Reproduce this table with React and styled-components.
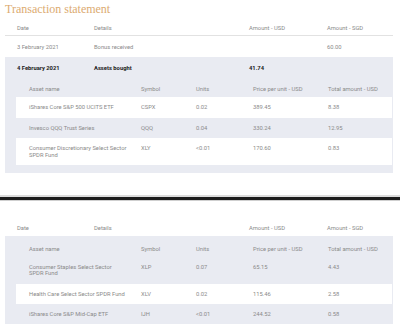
import React from "react";
import styled, { createGlobalStyle } from "styled-components";

const GlobalStyle = createGlobalStyle`
  body {
    margin: 0;
    background: #fff;
    font-family: Roboto, "Liberation Sans", sans-serif;
  }
`;

const firstHoldings = [
  { name: "iShares Core S&P 500 UCITS ETF", symbol: "CSPX", units: "0.02", price: "389.45", total: "8.38" },
  { name: "Invesco QQQ Trust Series", symbol: "QQQ", units: "0.04", price: "330.24", total: "12.95" },
  { name: "Consumer Discretionary Select Sector\nSPDR Fund", symbol: "XLY", units: "<0.01", price: "170.60", total: "0.83" },
];

const secondHoldings = [
  { name: "Consumer Staples Select Sector\nSPDR Fund", symbol: "XLP", units: "0.07", price: "65.15", total: "4.43" },
  { name: "Health Care Select Sector SPDR Fund", symbol: "XLV", units: "0.02", price: "115.46", total: "2.58" },
  { name: "iShares Core S&P Mid-Cap ETF", symbol: "IJH", units: "<0.01", price: "244.52", total: "0.58" },
];

const HoldingsTable = ({ rows, firstShaded }) => (
  <>
    <SubHeader>
      <Cell>Asset name</Cell>
      <Cell>Symbol</Cell>
      <Cell>Units</Cell>
      <Cell>Price per unit - USD</Cell>
      <Cell>Total amount - USD</Cell>
    </SubHeader>
    {rows.map((r, i) => (
      <HoldingRow key={r.symbol} $shaded={(i % 2 === 0) === firstShaded}>
        <NameCell>{r.name}</NameCell>
        <Cell>{r.symbol}</Cell>
        <Cell>{r.units}</Cell>
        <Cell>{r.price}</Cell>
        <Cell>{r.total}</Cell>
      </HoldingRow>
    ))}
  </>
);

const App = () => {
  return (
    <Page>
      <GlobalStyle />
      <Title>Transaction statement</Title>
      <Statement>
        <TxRow $head $line>
          <Cell>Date</Cell>
          <Cell>Details</Cell>
          <Cell>Amount - USD</Cell>
          <Cell>Amount - SGD</Cell>
        </TxRow>
        <TxRow>
          <Cell>3 February 2021</Cell>
          <Cell>Bonus received</Cell>
          <Cell></Cell>
          <Cell>60.00</Cell>
        </TxRow>
        <GreyBox $bottom={8}>
          <TxRow $bold>
            <Cell>4 February 2021</Cell>
            <Cell>Assets bought</Cell>
            <Cell>41.74</Cell>
            <Cell></Cell>
          </TxRow>
          <HoldingsTable rows={firstHoldings} firstShaded={false} />
        </GreyBox>
      </Statement>

      <Divider />

      <Statement>
        <TxRow $top={24}>
          <Cell>Date</Cell>
          <Cell>Details</Cell>
          <Cell>Amount - USD</Cell>
          <Cell>Amount - SGD</Cell>
        </TxRow>
        <GreyBox $bottom={0} $subTop={10}>
          <HoldingsTable rows={secondHoldings} firstShaded={true} />
        </GreyBox>
      </Statement>
    </Page>
  );
};

export default App;

const Page = styled.div`
  width: 400px;
  height: 324px;
  overflow: hidden;
  font-size: 5.8px;
  color: #8a8a8a;
`;

const Title = styled.h1`
  margin: 0;
  padding-left: 5px;
  height: 17px;
  line-height: 18px;
  font-family: "Liberation Serif", serif;
  font-weight: 400;
  font-size: 12px;
  color: #dcab71;
`;

const Statement = styled.div`
  margin: 0 7px 0 5px;
`;

const TxRow = styled.div`
  display: grid;
  grid-template-columns: 77px 155px 78px 1fr;
  padding: ${(p) => (p.$top ? p.$top : 8)}px 0 ${(p) => (p.$head && !p.$top ? 4 : p.$top ? 5 : 7)}px 12px;
  line-height: 6px;
  border-bottom: ${(p) => (p.$line ? "1px solid #e2e2e2" : "none")};
  font-weight: ${(p) => (p.$bold ? 700 : 400)};
  color: ${(p) => (p.$bold ? "#222" : "#8a8a8a")};
`;

const GreyBox = styled.div`
  background: #e9ebf2;
  padding-bottom: ${(p) => p.$bottom}px;

  & > div:first-child {
    padding-top: ${(p) => (p.$subTop ? p.$subTop : 8)}px;
  }
`;

const Cell = styled.div`
  white-space: nowrap;
`;

const NameCell = styled.div`
  padding-right: 6px;
  white-space: pre-line;
`;

const SubHeader = styled.div`
  display: grid;
  grid-template-columns: 112px 55px 57px 75px 1fr;
  margin: 0 1px 0 11px;
  padding: 8px 0 5px 13px;
  line-height: 6px;
`;

const HoldingRow = styled.div`
  display: grid;
  grid-template-columns: 112px 55px 57px 75px 1fr;
  align-items: start;
  margin: 0 1px 0 11px;
  padding: 7px 0 7px 13px;
  line-height: 6.5px;
  background: ${(p) => (p.$shaded ? "#e9ebf2" : "#fff")};
`;

const Divider = styled.div`
  margin-top: 22px;
  height: 2.5px;
  background: #1c1c1c;
  border-top: 2px solid #dcdcdc;
  border-bottom: 1.5px solid #cfcfcf;
`;
